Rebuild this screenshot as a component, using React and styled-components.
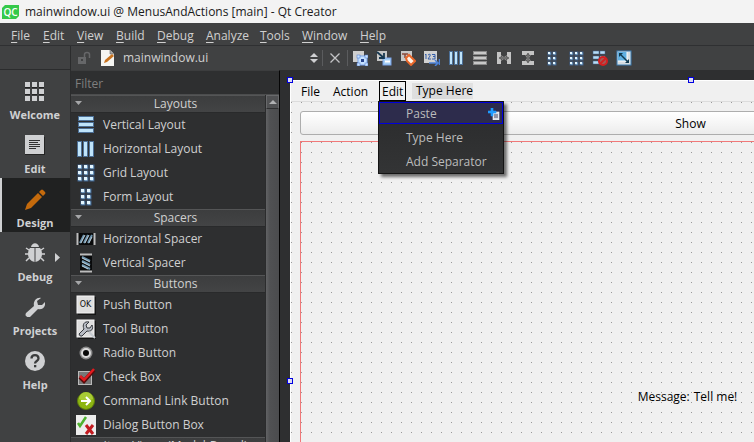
import React from 'react';
import styled, { createGlobalStyle, css } from 'styled-components';

const GlobalStyle = createGlobalStyle`
  * { box-sizing: border-box; }
  html, body { margin: 0; overflow: hidden; }
  body, button, input, select {
    font-family: "Open Sans", "Noto Sans", sans-serif;
    font-size: 12px;
    line-height: 16px;
  }
  button, input, select { border: 0; padding: 0; margin: 0; background: none; color: inherit; }
  svg { display: block; flex: none; }
`;

const Window = styled.div`
  display: flex;
  flex-direction: column;
  height: 100vh;
  overflow: hidden;
  background: #2e2f30;
  color: #d0d0d0;
`;

const TitleBar = styled.header`
  display: flex;
  align-items: center;
  gap: 6px;
  flex: none;
  height: 23px;
  padding-left: 2px;
  background: #f3f3f3;
  color: #1a1a1a;
`;

const Title = styled.h1`
  margin: 0;
  font-size: 12px;
  line-height: 16px;
  font-weight: 400;
  white-space: nowrap;
`;

const MenuBar = styled.nav`
  display: grid;
  grid-template-columns: 32px 34px 39px 41px 49px 54px 42px 58px 40px;
  flex: none;
  height: 23px;
  padding: 3px 0 0 11px;
  background: #404142;
  border-bottom: 1px solid #2f3032;
`;

const MenuButton = styled.button`
  text-align: left;
  white-space: nowrap;
`;

const Mnemonic = styled.span`
  text-decoration: underline;
  text-underline-offset: 2px;
`;

const Body = styled.div`
  display: flex;
  flex: 1;
  min-height: 0;
`;

const ModeBar = styled.nav`
  display: flex;
  flex-direction: column;
  flex: none;
  width: 71px;
  padding-top: 23px;
  background: #404142;
  border-right: 1px solid #2b2c2d;
`;

const ModeButton = styled.button`
  display: flex;
  flex-direction: column;
  align-items: center;
  justify-content: space-between;
  position: relative;
  flex: none;
  height: 54px;
  padding: 11px 0 1px;
  font-size: 11px;
  font-weight: 700;
  color: #cfd0d2;
  ${(p) => p.$active && css`
    background: #202121;
    box-shadow: inset 2px 0 0 #cfd0d2;
  `}
`;

const ModeTop = styled.div`
  height: 1px;
  background: #2b2c2d;
  flex: none;
`;

const ModeArrow = styled.span`
  position: absolute;
  right: 10px;
  top: 21px;
`;

const Workspace = styled.div`
  display: flex;
  flex-direction: column;
  flex: 1;
  min-width: 0;
`;

const Toolbar = styled.div`
  display: flex;
  align-items: center;
  flex: none;
  height: 24px;
  background: #404142;
`;

const LockButton = styled.button`
  display: flex;
  padding: 0 8px 0 6px;
`;

const FileChooser = styled.label`
  display: flex;
  align-items: center;
  flex: none;
  width: 223px;
  padding-right: 4px;
  gap: 8px;
`;

const FileSelect = styled.select`
  appearance: none;
  flex: 1;
  height: 20px;
`;

const ToolButton = styled.button`
  display: flex;
  align-items: center;
  justify-content: center;
  flex: none;
  width: 24px;
  height: 24px;
`;

const Divider = styled.span`
  flex: none;
  width: 1px;
  height: 16px;
  background: #5b5c5e;
`;

const Editor = styled.div`
  display: flex;
  flex: 1;
  min-height: 0;
`;

const WidgetBox = styled.aside`
  display: flex;
  flex-direction: column;
  flex: none;
  width: 209px;
  border-top: 1px solid #3c3d3e;
  border-right: 1px solid #050505;
`;

const Filter = styled.input`
  flex: none;
  height: 23px;
  padding: 2px 4px 0;
  outline: 0;
  &::placeholder { color: #7f7f7f; opacity: 1; }
`;

const BoxScroller = styled.div`
  display: flex;
  flex: 1;
  min-height: 0;
  border-top: 1px solid #4c4d4e;
`;

const Categories = styled.div`
  flex: 1;
  overflow: hidden;
`;

const Category = styled.button`
  display: grid;
  grid-template-columns: 16px 1fr 4px;
  align-items: center;
  width: 100%;
  height: 18px;
  padding: 0 0 1px 3px;
  line-height: 14px;
  background: linear-gradient(#3c3d3e, #434445);
  border-top: 1px solid #545556;
  border-bottom: 1px solid #292a2b;
`;

const WidgetList = styled.ul`
  margin: 0;
  padding: 0;
  list-style: none;
`;

const WidgetRow = styled.li`
  display: grid;
  grid-template-columns: 22px 1fr;
  align-items: center;
  column-gap: 6px;
  height: 24px;
  padding-left: 4px;
  white-space: nowrap;
`;

const IconCell = styled.span`
  display: flex;
  justify-content: center;
`;

const ScrollBar = styled.div`
  display: flex;
  flex-direction: column;
  flex: none;
  width: 14px;
  border-left: 1px solid #2b2c2d;
  background: linear-gradient(90deg, #626365, #505153 30%, #4b4c4e);
`;

const ScrollUp = styled.button`
  display: flex;
  align-items: center;
  justify-content: center;
  height: 14px;
  background: #505153;
  border: 1px solid #68696b;
  border-bottom-color: #2e2f30;
`;

const Canvas = styled.main`
  flex: 1;
  min-width: 0;
  overflow: hidden;
  padding: 10px 0 0 10px;
`;

const Form = styled.section`
  position: relative;
  width: 800px;
  height: 600px;
  background: #f0f0f0;
  color: #000;
  border-left: 1px solid #fff;
  border-top: 1px solid #fff;
`;

const FormMenuBar = styled.div`
  display: grid;
  grid-template-columns: 32px 46px 28px 66px;
  align-items: center;
  height: 21px;
  padding-left: 10px;
  border-bottom: 1px solid #dcdcdc;
`;

const FormMenu = styled.button`
  height: 20px;
  padding-top: 2px;
  text-align: left;
  white-space: nowrap;
  ${(p) => p.$open && css`
    width: 27px;
    padding: 1px 0 0 2px;
    border: 1px solid #000;
  `}
  ${(p) => p.$placeholder && css`
    height: 16px;
    margin-left: 5px;
    padding: 0 0 0 4px;
    background: linear-gradient(90deg, #dfdfdf, #d8d8d8 50%, #e2e2e2);
  `}
`;

const FormBody = styled.div`
  height: 578px;
  padding: 9px;
  background-image: conic-gradient(from 270deg at 1px 1px, #999 90deg, transparent 0);
  background-size: 10px 10px;
`;

const PushButton = styled.button`
  display: block;
  width: 100%;
  height: 24px;
  margin-bottom: 6px;
  padding-top: 2px;
  border: 1px solid #adadad;
  border-radius: 3px;
  background: linear-gradient(#fff, #f6f6f6 50%, #ececec);
`;

const LayoutFrame = styled.div`
  display: flex;
  align-items: center;
  justify-content: center;
  height: 511px;
  padding-right: 6px;
  border: 1px solid #f07878;
  gap: 4px;
`;

const MessageText = styled.span`
  white-space: nowrap;
`;

const Handle = styled.span`
  position: absolute;
  width: 6px;
  height: 6px;
  border: 1px solid #0000e0;
  background: #dcdcf0;
  left: ${(p) => p.$x};
  top: ${(p) => p.$y};
`;

const Popup = styled.div`
  position: absolute;
  left: 87px;
  top: 20px;
  width: 126px;
  height: 73px;
  border: 1px solid #141414;
  background: linear-gradient(#2a2b2c, #333435);
  box-shadow: 3px 3px 3px rgba(0, 0, 0, 0.55);
  color: #bcbcbc;
`;

const PopupItem = styled.button`
  display: flex;
  align-items: center;
  justify-content: space-between;
  width: 100%;
  height: 24px;
  padding-left: 27px;
  white-space: nowrap;
  ${(p) => p.$selected && css`
    width: 124px;
    height: 22px;
    margin-bottom: 2px;
    padding: 2px 2px 0 26px;
    background: #2d2c4c;
    border: 1px solid #0000dc;
  `}
`;

function Svg({ w = 16, h, v, children }) {
  const height = h || w;
  return (
    <svg width={w} height={height} viewBox={v || `0 0 ${w} ${height}`} aria-hidden="true">
      {children}
    </svg>
  );
}

const Rects = ({ list, ...rest }) =>
  list.map(([x, y, width, height]) => (
    <rect key={`${x}-${y}`} x={x} y={y} width={width} height={height} {...rest} />
  ));

const BLUE = { fill: '#bfe4fa', stroke: '#4c6f96', strokeWidth: 1 };
const cells = (xs, ys, s) => ys.flatMap((y) => xs.map((x) => [x, y, s, s]));

const QtLogo = () => (
  <Svg w={17} h={16}>
    <path d="M3 1h14v11l-3 3H0V4z" fill="#35c94a" />
    <text x="8.5" y="12" textAnchor="middle" fontFamily="Open Sans, sans-serif" fontSize="10" fontWeight="600" fill="#fff">QC</text>
  </Svg>
);

const modes = [
  ['Welcome', (
    <Svg w={20}>
      <Rects list={cells([0, 7, 14], [2, 9, 16], 5)} fill="#222" />
      <Rects list={cells([0, 7, 14], [1, 8, 15], 5)} fill="#cfd0d2" />
    </Svg>
  )],
  ['Edit', (
    <Svg w={20}>
      <rect x="0" y="2" width="20" height="18" fill="#242424" />
      <rect x="0" y="0" width="19" height="19" fill="#cfd0d2" />
      <path d="M4 5.500h11M4 7.500h9M4 9.500h11M4 11.500h11M4 13.500h7" stroke="#333" />
    </Svg>
  )],
  ['Design', (
    <Svg w={22}>
      <path d="M1 21l2-6L14 4l4 4L7 19z" fill="#c46a0c" />
      <path d="M15 3l2-2q1-1 2 0l2 2q1 1 0 2l-2 2z" fill="#c46a0c" />
    </Svg>
  )],
  ['Debug', (
    <Svg w={20}>
      <path d="M6 4c1-5 7-5 8 0z" fill="#cfd0d2" />
      <path d="M9.500 5v14C5.500 18 3 15 3 11c0-3 1-5 2-6zM10.500 5v14c4-1 6.500-4 6.500-8 0-3-1-5-2-6z" fill="#cfd0d2" />
      <path d="M4 7L1 5M3 11H0M4 15l-3 3M16 7l3-2M17 11h3M16 15l3 3" stroke="#cfd0d2" strokeWidth="1.500" fill="none" />
    </Svg>
  )],
  ['Projects', (
    <Svg w={20}>
      <path d="M1 16L9 9C8 5 11 0 16 1L12 4l1 4 4 0 3-3c1 5-3 8-7 7L5 20q-2 1-4-1-1-1 0-3z" fill="#cfd0d2" />
    </Svg>
  )],
  ['Help', (
    <Svg w={20}>
      <circle cx="10" cy="11" r="9" fill="#242424" />
      <circle cx="10" cy="10" r="10" fill="#cfd0d2" />
      <path d="M6.500 7.500c0-4.500 7-4.500 7 0 0 2.500-3.500 2.500-3.500 5" fill="none" stroke="#3b3c3d" strokeWidth="2.300" />
      <rect x="9" y="14" width="2.300" height="2.300" fill="#3b3c3d" />
    </Svg>
  )],
];

const Lines = ({ gray, vertical, w = 16 }) => {
  const color = gray ? { fill: '#c8c8c8', stroke: '#8a8a8a' } : BLUE;
  const offsets = w === 16 ? [1, 6, 11] : [0, 6, 12];
  const t = w === 16 ? 3 : 4;
  const list = offsets.map((o) => (vertical ? [o + 0.5, 1.5, t, w - 3] : [1.5, o + 0.5, w - 3, t]));
  return <Svg w={w}><Rects list={list} {...color} /></Svg>;
};

const GridIcon = ({ cols, w = 16 }) => {
  const xs = w === 16 ? (cols === 3 ? [2, 7, 12] : [4, 9]) : (cols === 3 ? [1, 7, 13] : [4, 10]);
  const ys = w === 16 ? [2, 7, 12] : [1, 7, 13];
  const s = w === 16 ? 3 : 4;
  return (
    <Svg w={w}>
      <Rects list={cells(xs, ys, s)} fill="#9fcdec" stroke="#41628b" />
      <Rects list={cells(xs, ys, s - 1)} fill="#e4f6ff" />
    </Svg>
  );
};

const Splitter = ({ vertical }) => (
  <Svg w={16}>
    <g transform={vertical ? 'rotate(90 8 8)' : undefined}>
      <path d="M1 2h4v12H1zM11 2h4v12h-4z" fill="#c4c4c4" />
      <path d="M5 5l3 2 3-2v6L8 9l-3 2z" fill="#8d8d8d" />
      <path d="M3 8h10M6 6L3.500 8 6 10M10 6l2.500 2-2.500 2" fill="none" stroke="#555" />
    </g>
  </Svg>
);

const tools = [
  ['Edit widgets', (
    <Svg><rect x="1" y="1" width="11" height="11" fill="#cfcfcf" />
      <rect x="6" y="6" width="9" height="9" fill="#c4e0ff" stroke="#7ba4e8" />
      <Rects list={cells([5, 13], [5, 13], 3)} fill="#c9e2ff" stroke="#4774c9" strokeWidth="0.500" />
      <rect x="9" y="9" width="3" height="3" fill="#26438d" /></Svg>
  )],
  ['Edit signals and slots', (
    <Svg><rect x="1" y="1" width="10" height="10" fill="#c6c6c6" />
      <rect x="7" y="8" width="8" height="7" fill="#a6d0f5" stroke="#7ba4e8" />
      <path d="M9 11.500h5" stroke="#fff" strokeWidth="2" />
      <path d="M1 2l7 6M8 3v5H3" stroke="#173850" strokeWidth="1.800" fill="none" /></Svg>
  )],
  ['Edit buddies', (
    <Svg><rect x="1" y="1" width="11" height="10" fill="#c8c8c8" />
      <path d="M2 4h6M5 4v4" stroke="#8a4a3a" strokeWidth="1.500" />
      <path d="M6 8l3-3 6 6-4 4-4-4z" fill="#fff3e8" stroke="#e8672a" strokeWidth="2" /></Svg>
  )],
  ['Edit tab order', (
    <Svg><rect x="0" y="1" width="13" height="12" fill="#d1d1d1" />
      <path d="M1 5l1-1v5M4 5q3-2 2 1L4 9h3M8 4.500h3v4.500H8M9 6.500h2" stroke="#345eaa" fill="none" />
      <path d="M5 13h9M11 10l3 3-3 3M15.500 9v6" stroke="#4c83d9" strokeWidth="1.500" fill="none" /></Svg>
  )],
  ['Lay out horizontally', <Lines vertical />],
  ['Lay out vertically', <Lines gray />],
  ['Lay out horizontally in splitter', <Splitter />],
  ['Lay out vertically in splitter', <Splitter vertical />],
  ['Lay out in a form', <GridIcon cols={2} />],
  ['Lay out in a grid', <GridIcon cols={3} />],
  ['Break layout', (
    <Svg><Rects list={[[1, 1, 6, 3], [8, 1, 5, 3], [1, 6, 6, 3], [8, 6, 5, 3], [1, 11, 6, 3]]} fill="#b6dcf5" stroke="#41628b" strokeWidth="0.500" />
      <circle cx="11" cy="11" r="4" fill="#a45a58" stroke="#d32021" strokeWidth="2" />
      <path d="M8 14l6-6" stroke="#d32021" strokeWidth="2" /></Svg>
  )],
  ['Adjust size', (
    <Svg><rect x="1" y="1" width="14" height="14" fill="#d5dde2" stroke="#3d7fb5" />
      <rect x="2" y="2" width="9" height="9" fill="#5fb0e3" /><path d="M11 2v9H2" fill="none" stroke="#fff" />
      <path d="M4 4l8 8" stroke="#123b51" strokeWidth="1.500" />
      <path d="M3 3h4L3 7zM13 13V9l-4 4z" fill="#123b51" /></Svg>
  )],
];

const SpacerIcon = ({ vertical }) => (
  <Svg w={20}>
    <g transform={vertical ? 'rotate(90 10 10)' : undefined}>
      <rect x="1" y="4" width="18" height="12" fill="#090a0b" />
      <path d="M4 14l4-8M8 14l4-8M12 14l4-8" stroke="#6d94ae" strokeWidth="2" />
      <path d="M5 14l4-8M9 14l4-8M13 14l3-6" stroke="#d7e6ee" strokeWidth="0.800" />
      <path d="M1.500 4v12M18.500 4v12" stroke="#bdbdbd" strokeWidth="2" />
    </g>
  </Svg>
);

const Tile = () => (
  <>
    <rect x="2" y="2" width="18" height="18" fill="#151515" />
    <rect x="1" y="1" width="17" height="17" fill="#dedede" stroke="#f5f5f5" />
  </>
);

const categories = [
  ['Layouts', [
    ['Vertical Layout', <Lines w={18} />],
    ['Horizontal Layout', <Lines w={18} vertical />],
    ['Grid Layout', <GridIcon w={18} cols={3} />],
    ['Form Layout', <GridIcon w={18} cols={2} />],
  ]],
  ['Spacers', [
    ['Horizontal Spacer', <SpacerIcon />],
    ['Vertical Spacer', <SpacerIcon vertical />],
  ]],
  ['Buttons', [
    ['Push Button', (
      <Svg w={20}><Tile />
        <text x="9.500" y="12" textAnchor="middle" fontFamily="DejaVu Sans, sans-serif" fontSize="8" fill="#111">OK</text></Svg>
    )],
    ['Tool Button', (
      <Svg w={20}><Tile />
        <path d="M3 15l5-5C6 6 8 2 13 3l-3 3 1 3 3 0 2-3c2 4-1 7-5 6l-5 5q-2 1-3-2z" fill="#b8bcc4" stroke="#35383d" />
        <path d="M13 13l6 6" stroke="#c7ccd1" strokeWidth="2" /></Svg>
    )],
    ['Radio Button', (
      <Svg w={20}><circle cx="10" cy="10" r="6.500" fill="#8a8a8a" /><circle cx="10" cy="10" r="5" fill="#dcdcdc" /><circle cx="10" cy="10" r="3" fill="#080808" /></Svg>
    )],
    ['Check Box', (
      <Svg w={20}><rect x="2.500" y="4.500" width="13" height="13" fill="#777" stroke="#bababa" />
        <path d="M4 10l4 4L18 3" fill="none" stroke="#560c0c" strokeWidth="4" />
        <path d="M4 9l4 4L18 2" fill="none" stroke="#e21c20" strokeWidth="2.500" /></Svg>
    )],
    ['Command Link Button', (
      <Svg w={20}><circle cx="10" cy="10" r="8.500" fill="#8db512" stroke="#5d7c0c" />
        <path d="M3 8a7 7 0 0 1 14 0q-7 3-14 0" fill="#a8ca35" />
        <path d="M5 10h9M10 6l4 4-4 4" fill="none" stroke="#fff" strokeWidth="2" /></Svg>
    )],
    ['Dialog Button Box', (
      <Svg w={22}><rect x="1" y="1" width="20" height="20" fill="#ededed" />
        <path d="M3 9l2 3 6-9" fill="none" stroke="#4eb22e" strokeWidth="2.500" />
        <path d="M11 11l7 9M18 11l-7 9" stroke="#c21b20" strokeWidth="3" /></Svg>
    )],
  ]],
  ['Item Views (Model-Based)', []],
];

const menus = ['File', 'Edit', 'View', 'Build', 'Debug', 'Analyze', 'Tools', 'Window', 'Help'];

export default function App() {
  return (
    <Window>
      <GlobalStyle />
      <TitleBar>
        <QtLogo />
        <Title>mainwindow.ui @ MenusAndActions [main] - Qt Creator</Title>
      </TitleBar>
      <MenuBar>
        {menus.map((m) => (
          <MenuButton key={m}><Mnemonic>{m[0]}</Mnemonic>{m.slice(1)}</MenuButton>
        ))}
      </MenuBar>
      <Body>
        <ModeBar>
          <ModeTop />
          {modes.map(([name, icon]) => (
            <ModeButton key={name} $active={name === 'Design'}>
              {icon}
              {name}
              {name === 'Debug' && (
                <ModeArrow><Svg w={5} h={9}><path d="M0 0l5 4.500L0 9z" fill="#cfd0d2" /></Svg></ModeArrow>
              )}
            </ModeButton>
          ))}
        </ModeBar>
        <Workspace>
          <Toolbar>
            <LockButton aria-label="Writable">
              <Svg w={14} h={14}>
                <rect x="1" y="6" width="8" height="7" fill="#666769" />
                <path d="M7.500 6V3.500q0-2 2.500-2t2.500 2V7" fill="none" stroke="#666769" strokeWidth="1.500" />
                <rect x="4" y="8" width="2" height="2" fill="#404142" />
              </Svg>
            </LockButton>
            <FileChooser>
              <Svg w={16}>
                <path d="M2 0h9l4 4v12H2z" fill="#f5f5f2" />
                <path d="M11 0v4h4" fill="#aaa" stroke="#444" strokeWidth="0.500" />
                <path d="M5 13l1-3 7-6 2 2-7 6z" fill="#c87320" />
              </Svg>
              <FileSelect aria-label="Open document"><option>mainwindow.ui</option></FileSelect>
              <Svg w={8} h={12}><path d="M0 5l4-4 4 4zM0 7l4 4 4-4z" fill="#cfd0d2" /></Svg>
            </FileChooser>
            <Divider />
            <ToolButton aria-label="Close document">
              <Svg w={12}><path d="M1.500 1.500l9 9M10.500 1.500l-9 9" stroke="#c3c4c6" strokeWidth="1.300" /></Svg>
            </ToolButton>
            <Divider />
            {tools.map(([name, icon]) => <ToolButton key={name} aria-label={name}>{icon}</ToolButton>)}
          </Toolbar>
          <Editor>
            <WidgetBox>
              <Filter placeholder="Filter" aria-label="Filter" />
              <BoxScroller>
                <Categories>
                  {categories.map(([name, items]) => (
                    <React.Fragment key={name}>
                      <Category>
                        <Svg w={9} h={6}><path d="M1 0h7L4.500 4z" fill="#a6a7a9" /></Svg>
                        {name}
                      </Category>
                      <WidgetList>
                        {items.map(([label, icon]) => (
                          <WidgetRow key={label}><IconCell>{icon}</IconCell>{label}</WidgetRow>
                        ))}
                      </WidgetList>
                    </React.Fragment>
                  ))}
                </Categories>
                <ScrollBar>
                  <ScrollUp aria-label="Scroll up"><Svg w={8} h={4}><path d="M0 4l4-4 4 4z" fill="#b0b1b3" /></Svg></ScrollUp>
                </ScrollBar>
              </BoxScroller>
            </WidgetBox>
            <Canvas>
              <Form>
                <FormMenuBar>
                  <FormMenu>File</FormMenu>
                  <FormMenu>Action</FormMenu>
                  <FormMenu $open>Edit</FormMenu>
                  <FormMenu $placeholder>Type Here</FormMenu>
                </FormMenuBar>
                <FormBody>
                  <PushButton>Show</PushButton>
                  <LayoutFrame>
                    <MessageText>Message:</MessageText>
                    <MessageText>Tell me!</MessageText>
                  </LayoutFrame>
                </FormBody>
                <Popup>
                  <PopupItem $selected>
                    Paste
                    <Svg w={12}>
                      <rect x="5" y="4" width="6" height="8" fill="#d8dce6" stroke="#fff" strokeWidth="0.600" />
                      <path d="M6 7h4M6 9h4" stroke="#4a4a66" />
                      <path d="M3 0h2v3h3v2H5v3H3V5H0V3h3z" fill="#1e9bff" stroke="#1e9bff" strokeWidth="0.600" />
                    </Svg>
                  </PopupItem>
                  <PopupItem>Type Here</PopupItem>
                  <PopupItem>Add Separator</PopupItem>
                </Popup>
                <Handle $x="-4px" $y="-4px" />
                <Handle $x="397px" $y="-4px" />
                <Handle $x="-4px" $y="297px" />
              </Form>
            </Canvas>
          </Editor>
        </Workspace>
      </Body>
    </Window>
  );
}
